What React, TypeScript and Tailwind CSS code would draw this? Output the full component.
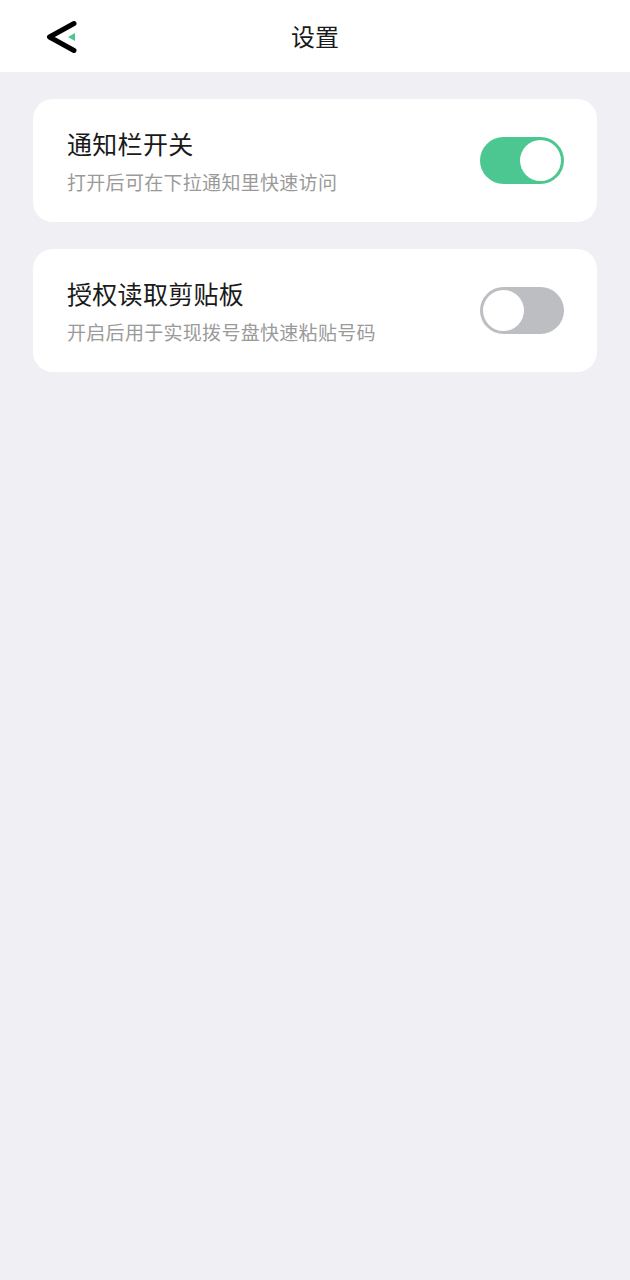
import React, { useState } from "react";

const font = { fontFamily: '"Noto Sans CJK SC", "Noto Sans", sans-serif' };

function Toggle({ on, onChange }: { on: boolean; onChange: () => void }) {
  return (
    <button
      onClick={onChange}
      className={`relative w-[84px] h-[47px] rounded-full shrink-0 transition-colors ${
        on ? "bg-[#4cc791]" : "bg-[#bcbec2]"
      }`}
    >
      <span
        className={`absolute top-[3px] w-[41px] h-[41px] rounded-full bg-white transition-all ${
          on ? "left-[40px]" : "left-[3px]"
        }`}
      />
    </button>
  );
}

function SettingCard({
  title,
  desc,
  on,
  onChange,
}: {
  title: string;
  desc: string;
  on: boolean;
  onChange: () => void;
}) {
  return (
    <div className="bg-white rounded-[20px] h-[123px] pl-[34px] pr-[33px] flex items-center justify-between">
      <div className="flex flex-col">
        <span className="text-[25px] leading-[30px] tracking-[0.3px] text-[#1a1a1a]">{title}</span>
        <span className="text-[19px] leading-[24px] tracking-[0.3px] text-[#9a9a9a] mt-[12px]">
          {desc}
        </span>
      </div>
      <Toggle on={on} onChange={onChange} />
    </div>
  );
}

export default function App() {
  const [notify, setNotify] = useState(true);
  const [clip, setClip] = useState(false);

  return (
    <div className="min-h-[1280px] bg-[#efeff4]" style={font}>
      {/* Header */}
      <div className="relative h-[72px] bg-white flex items-center justify-center">
        <button className="absolute left-[44px] top-[20px] w-[36px] h-[34px]">
          <svg width="36" height="34" viewBox="0 0 36 34">
            <polyline
              points="30,3.5 5.5,17 30,30.5"
              fill="none"
              stroke="#000"
              strokeWidth="5"
              strokeLinecap="round"
              strokeLinejoin="round"
            />
            <polygon points="24,17 31,13 31,21" fill="#4cc791" />
          </svg>
        </button>
        <span className="text-[24px] text-[#1a1a1a]">设置</span>
      </div>

      {/* Cards */}
      <div className="px-[33px] pt-[27px] flex flex-col gap-[27px]">
        <SettingCard
          title="通知栏开关"
          desc="打开后可在下拉通知里快速访问"
          on={notify}
          onChange={() => setNotify(!notify)}
        />
        <SettingCard
          title="授权读取剪贴板"
          desc="开启后用于实现拨号盘快速粘贴号码"
          on={clip}
          onChange={() => setClip(!clip)}
        />
      </div>
    </div>
  );
}
